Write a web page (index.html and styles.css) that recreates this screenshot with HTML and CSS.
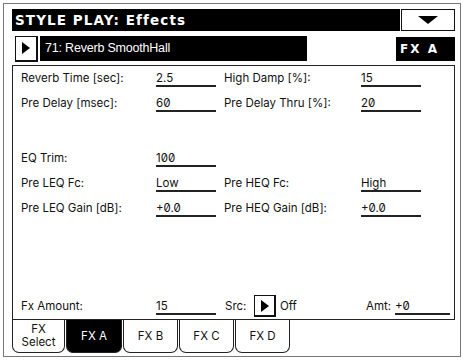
FILE: index.html
```
<!DOCTYPE html>
<html>
<head>
<meta charset="utf-8">
<link rel="stylesheet" href="styles.css">
</head>
<body>
<div class="screen">
  <div class="titlebar">
    <div class="title">STYLE PLAY: Effects</div>
    <div class="dropdown"><svg width="20" height="8" viewBox="0 0 20 8"><polygon points="0,0 20,0 10,8" fill="#000"/></svg></div>
  </div>
  <div class="preset">
    <div class="play-btn"><svg width="8" height="12" viewBox="0 0 8 12"><polygon points="0,0 8,6 0,12" fill="#000"/></svg></div>
    <div class="preset-name">71: Reverb SmoothHall</div>
    <div class="spacer"></div>
    <div class="fx-badge">FX A</div>
  </div>
  <div class="panel">
    <div class="row">
      <div class="label">Reverb Time [sec]:</div><div class="value">2.5</div>
      <div class="label2">High Damp [%]:</div><div class="value">15</div>
    </div>
    <div class="row">
      <div class="label">Pre Delay [msec]:</div><div class="value">60</div>
      <div class="label2">Pre Delay Thru [%]:</div><div class="value">20</div>
    </div>
    <div class="row eq-start">
      <div class="label">EQ Trim:</div><div class="value">100</div>
    </div>
    <div class="row">
      <div class="label">Pre LEQ Fc:</div><div class="value">Low</div>
      <div class="label2">Pre HEQ Fc:</div><div class="value">High</div>
    </div>
    <div class="row">
      <div class="label">Pre LEQ Gain [dB]:</div><div class="value">+0.0</div>
      <div class="label2">Pre HEQ Gain [dB]:</div><div class="value">+0.0</div>
    </div>
    <div class="row last">
      <div class="label">Fx Amount:</div><div class="value">15</div>
      <div class="src">Src:</div>
      <div class="src-btn"><svg width="8" height="12" viewBox="0 0 8 12"><polygon points="0,0 8,6 0,12" fill="#000"/></svg></div>
      <div class="off">Off</div>
      <div class="amt">Amt:</div><div class="value amt-val">+0</div>
    </div>
  </div>
  <div class="tabs">
    <div class="tab two">FX<br>Select</div>
    <div class="tab active">FX A</div>
    <div class="tab">FX B</div>
    <div class="tab">FX C</div>
    <div class="tab">FX D</div>
  </div>
</div>
</body>
</html>
```

FILE: styles.css
```
* { box-sizing: border-box; }
html, body { margin: 0; padding: 0; background: #fff; }
body { width: 464px; height: 360px; overflow: hidden; font-family: "DejaVu Sans", sans-serif; color: #111; }

.screen {
  margin: 3px 0 0 3px;
  width: 458px;
  height: 354px;
  border: 1px solid #777;
  padding: 5px 5px 3px 8px;
  display: flex;
  flex-direction: column;
}

.titlebar { display: flex; height: 22px; gap: 1px; }
.title {
  flex: 1;
  background: #000;
  color: #fff;
  font-weight: bold;
  font-size: 13.5px;
  letter-spacing: 1.1px;
  line-height: 22px;
  padding-left: 3px;
}
.dropdown {
  width: 54px;
  border: 1.5px solid #111;
  display: flex;
  align-items: center;
  justify-content: center;
  background: #fff;
}

.preset { display: flex; height: 27px; margin-top: 4px; padding-left: 3px; align-items: center; }
.play-btn {
  width: 23px;
  height: 26px;
  border: 1px solid #111;
  border-right-width: 2px;
  border-bottom-width: 2px;
  display: flex;
  align-items: center;
  justify-content: center;
}
.preset-name {
  width: 267px;
  height: 25px;
  margin-left: 2px;
  background: #000;
  color: #fff;
  font-family: "Liberation Sans", sans-serif;
  font-size: 12.5px;
  letter-spacing: -0.2px;
  line-height: 25px;
  padding-left: 5px;
}
.spacer { flex: 1; }
.fx-badge {
  width: 59px;
  height: 24px;
  background: #000;
  color: #fff;
  font-weight: bold;
  font-size: 12px;
  letter-spacing: 2px;
  line-height: 24px;
  padding-left: 4px;
}

.panel {
  flex: 1;
  margin-top: 3px;
  border: 1px solid #222;
  padding-left: 8px;
  display: flex;
  flex-direction: column;
}
.row {
  height: 25px;
  flex: none;
  display: flex;
  font-family: Inter, "DejaVu Sans", sans-serif;
  font-feature-settings: "zero" 1;
  font-size: 11.5px;
  line-height: 24px;
}
.row.eq-start { margin-top: 30px; }
.row.last { margin-top: auto; }
.label { width: 135px; }
.label2 { width: 137px; margin-left: 8px; }
.value { width: 60px; height: 21px; border-bottom: 2px solid #222; line-height: 24px; }
.src { margin-left: 9px; width: 29px; }
.src-btn {
  width: 22px;
  height: 22px;
  margin-top: 1px;
  border: 1px solid #111;
  border-right-width: 2px;
  border-bottom-width: 2px;
  display: flex;
  align-items: center;
  justify-content: center;
}
.off { margin-left: 4px; width: 86px; }
.amt { width: 29px; }
.amt-val { width: 55px; }

.tabs { display: flex; height: 33px; gap: 1px; flex: none; }
.tab {
  width: 55px;
  border: 1px solid #222;
  border-top: none;
  border-radius: 0 0 7px 7px;
  font-family: Inter, "DejaVu Sans", sans-serif;
  font-size: 11.5px;
  display: flex;
  align-items: center;
  justify-content: center;
  text-align: center;
  line-height: 13px;
}
.tab.two { width: 53px; }
.tab.active { background: #000; color: #fff; width: 56px; }
```
